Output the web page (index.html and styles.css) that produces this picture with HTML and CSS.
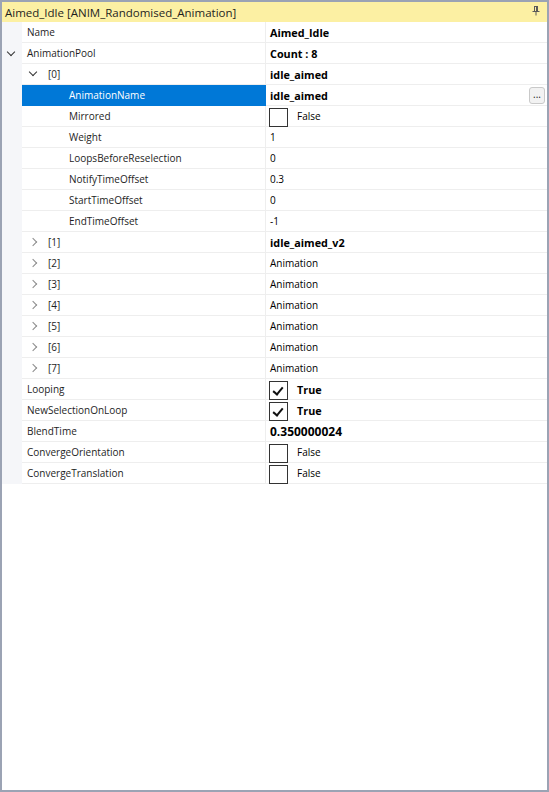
FILE: index.html
```html
<!DOCTYPE html>
<html lang="en">
  <head>
    <meta charset="UTF-8" />
    <title>Properties</title>
    <link rel="stylesheet" href="styles.css">
  </head>
  <body>
    <div class="panel">
      <div class="title">
        <span>Aimed_Idle [ANIM_Randomised_Animation]</span>
        <svg class="pin" width="8" height="10" viewBox="0 0 8 10">
          <path d="M2 0.5h4M2.5 0.5v5M5.5 0.5v5M4.5 1v4.5M0.5 5.5h7M4 5.5v4" stroke="#5a5a5a" stroke-width="1" fill="none" />
        </svg>
      </div>

      <div class="grid">
        <div class="row">
          <div class="gutter"></div>
          <div class="name">Name</div>
          <div class="value bold">Aimed_Idle</div>
        </div>
        <div class="row">
          <div class="gutter"><span class="chev open"></span></div>
          <div class="name">AnimationPool</div>
          <div class="value bold">Count : 8</div>
        </div>
        <div class="row">
          <div class="gutter"></div>
          <div class="name lvl1"><span class="chev open"></span>[0]</div>
          <div class="value bold">idle_aimed</div>
        </div>
        <div class="row selected">
          <div class="gutter"></div>
          <div class="name lvl2">AnimationName</div>
          <div class="value bold">idle_aimed<span class="dots">...</span></div>
        </div>
        <div class="row">
          <div class="gutter"></div>
          <div class="name lvl2">Mirrored</div>
          <div class="value"><span class="check"></span>False</div>
        </div>
        <div class="row">
          <div class="gutter"></div>
          <div class="name lvl2">Weight</div>
          <div class="value">1</div>
        </div>
        <div class="row">
          <div class="gutter"></div>
          <div class="name lvl2">LoopsBeforeReselection</div>
          <div class="value">0</div>
        </div>
        <div class="row">
          <div class="gutter"></div>
          <div class="name lvl2">NotifyTimeOffset</div>
          <div class="value">0.3</div>
        </div>
        <div class="row">
          <div class="gutter"></div>
          <div class="name lvl2">StartTimeOffset</div>
          <div class="value">0</div>
        </div>
        <div class="row">
          <div class="gutter"></div>
          <div class="name lvl2">EndTimeOffset</div>
          <div class="value">-1</div>
        </div>
        <div class="row">
          <div class="gutter"></div>
          <div class="name lvl1"><span class="chev"></span>[1]</div>
          <div class="value bold">idle_aimed_v2</div>
        </div>
        <div class="row">
          <div class="gutter"></div>
          <div class="name lvl1"><span class="chev"></span>[2]</div>
          <div class="value">Animation</div>
        </div>
        <div class="row">
          <div class="gutter"></div>
          <div class="name lvl1"><span class="chev"></span>[3]</div>
          <div class="value">Animation</div>
        </div>
        <div class="row">
          <div class="gutter"></div>
          <div class="name lvl1"><span class="chev"></span>[4]</div>
          <div class="value">Animation</div>
        </div>
        <div class="row">
          <div class="gutter"></div>
          <div class="name lvl1"><span class="chev"></span>[5]</div>
          <div class="value">Animation</div>
        </div>
        <div class="row">
          <div class="gutter"></div>
          <div class="name lvl1"><span class="chev"></span>[6]</div>
          <div class="value">Animation</div>
        </div>
        <div class="row">
          <div class="gutter"></div>
          <div class="name lvl1"><span class="chev"></span>[7]</div>
          <div class="value">Animation</div>
        </div>
        <div class="row">
          <div class="gutter"></div>
          <div class="name">Looping</div>
          <div class="value bold"><span class="check on"></span>True</div>
        </div>
        <div class="row">
          <div class="gutter"></div>
          <div class="name">NewSelectionOnLoop</div>
          <div class="value bold"><span class="check on"></span>True</div>
        </div>
        <div class="row">
          <div class="gutter"></div>
          <div class="name">BlendTime</div>
          <div class="value bold big">0.350000024</div>
        </div>
        <div class="row">
          <div class="gutter"></div>
          <div class="name">ConvergeOrientation</div>
          <div class="value"><span class="check"></span>False</div>
        </div>
        <div class="row">
          <div class="gutter"></div>
          <div class="name">ConvergeTranslation</div>
          <div class="value"><span class="check"></span>False</div>
        </div>
      </div>
    </div>
  </body>
</html>
```

FILE: styles.css
```css
body {
  margin: 0;
  font-family: "Open Sans", "Liberation Sans", sans-serif;
  font-size: 10px;
  color: #1e1e1e;
  background: #ffffff;
}
.panel {
  height: 792px;
  box-sizing: border-box;
  border: 2px solid #9ba3b4;
  background: #ffffff;
}
.title {
  height: 20px;
  display: flex;
  align-items: center;
  justify-content: space-between;
  padding: 0 7px 0 3px;
  background: #fcf0a3;
  font-size: 11.5px;
  color: #1e1e1e;
}
.pin {
  margin-top: -2px;
}
.row {
  display: flex;
  height: 21px;
}
.gutter {
  width: 20px;
  flex: none;
  background: #f5f6f9;
  display: flex;
  align-items: center;
  padding-left: 6px;
  box-sizing: border-box;
}
.name,
.value {
  display: flex;
  align-items: center;
  border-bottom: 1px solid #eeeeee;
  box-sizing: border-box;
}
.name {
  width: 244px;
  flex: none;
  padding-left: 5px;
  border-right: 1px solid #eeeeee;
}
.name.lvl1 {
  padding-left: 8px;
}
.name.lvl2 {
  padding-left: 47px;
}
.value {
  flex: 1;
  padding-left: 4px;
  color: #000000;
  position: relative;
}
.bold {
  font-weight: bold;
  font-size: 10.8px;
}
.big {
  font-size: 12px;
}
.selected .name {
  background: #0078d7;
  color: #ffffff;
  border-color: #0078d7;
}

/* expand / collapse arrows */
.chev {
  width: 5px;
  height: 5px;
  border-right: 1.4px solid #8a8a8a;
  border-bottom: 1.4px solid #8a8a8a;
  transform: rotate(-45deg);
  margin-right: 12px;
}
.chev.open {
  border-color: #333333;
  transform: rotate(45deg);
  margin-top: -4px;
}
.gutter .chev {
  margin-right: 0;
}

/* boolean editors */
.check {
  width: 19px;
  height: 19px;
  border: 1.5px solid #333333;
  margin: 2px 9px 0 -1px;
  flex: none;
  position: relative;
  box-sizing: border-box;
}
.check.on::after {
  content: "";
  position: absolute;
  left: 5px;
  top: 3px;
  width: 4px;
  height: 8px;
  border-right: 2px solid #111111;
  border-bottom: 2px solid #111111;
  transform: rotate(40deg);
}

.dots {
  position: absolute;
  right: 2px;
  top: 2px;
  width: 14px;
  height: 15px;
  border: 1px solid #c9c9c9;
  border-radius: 3px;
  background: #f2f2f2;
  font-weight: normal;
  font-size: 10px;
  line-height: 13px;
  text-align: center;
  color: #222222;
}
```
